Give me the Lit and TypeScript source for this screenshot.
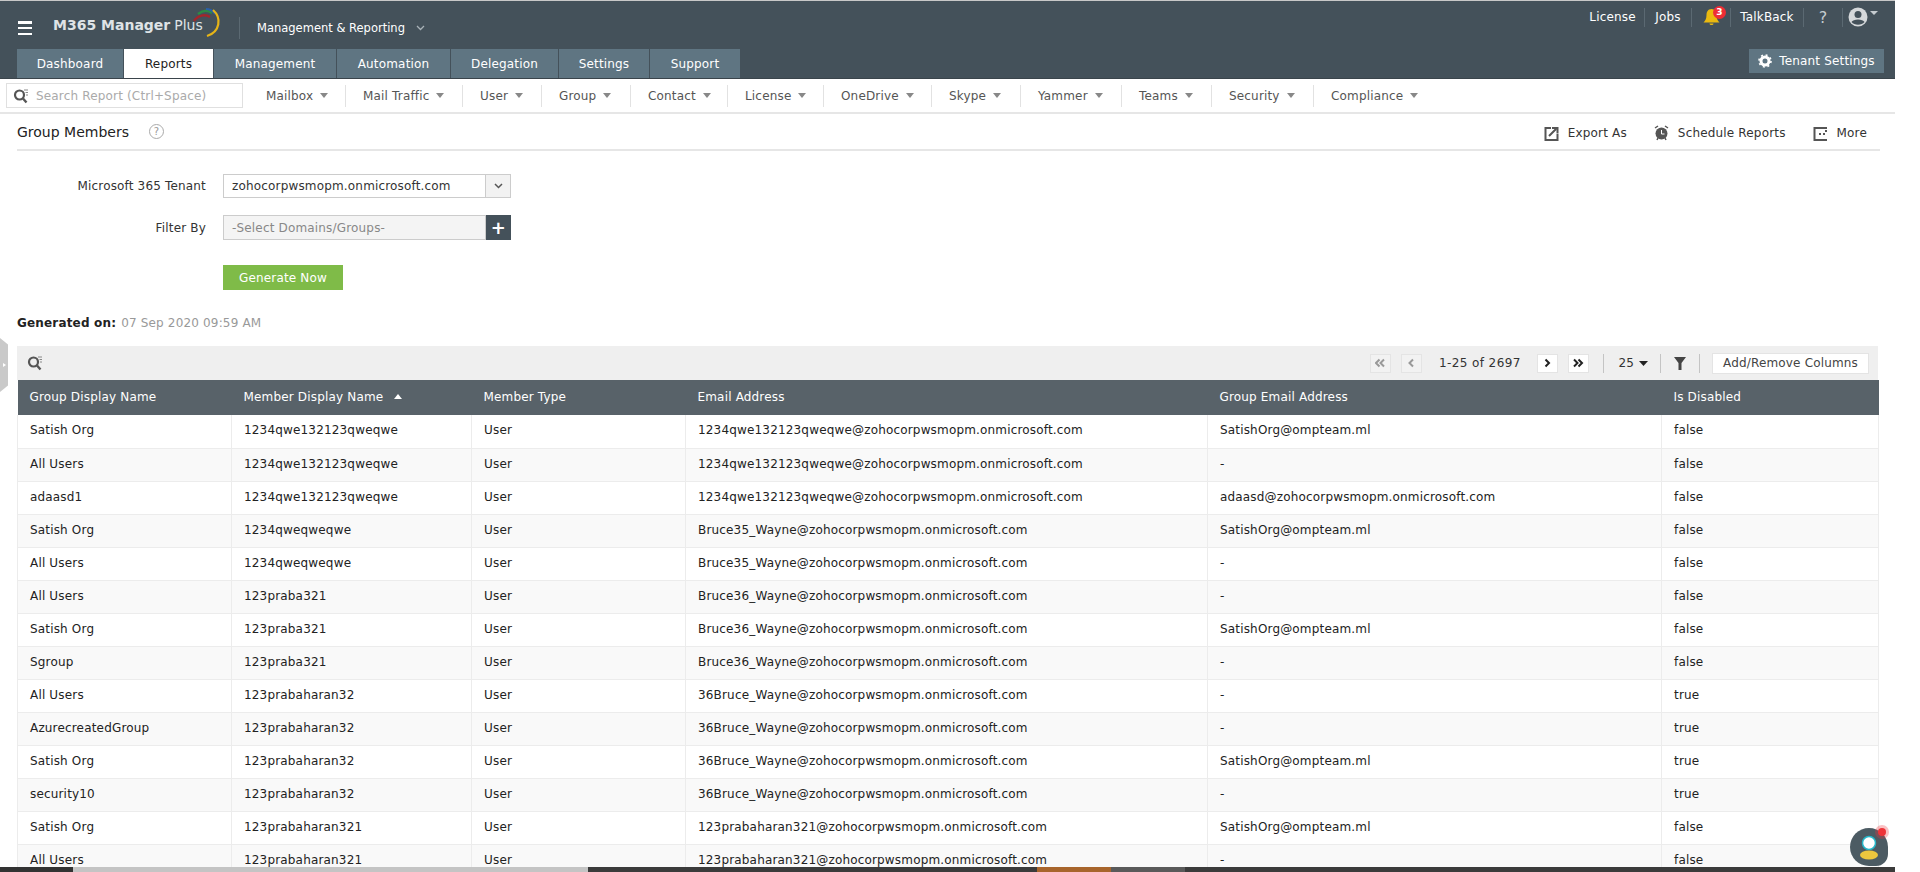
import { LitElement, html, css, svg } from "lit";
import { customElement } from "lit/decorators.js";

const D = "zohocorpwsmopm.onmicrosoft.com";
const rows: string[][] = [
  ["Satish Org", "1234qwe132123qweqwe", "1234qwe132123qweqwe@" + D, "SatishOrg@ompteam.ml", "false"],
  ["All Users", "1234qwe132123qweqwe", "1234qwe132123qweqwe@" + D, "-", "false"],
  ["adaasd1", "1234qwe132123qweqwe", "1234qwe132123qweqwe@" + D, "adaasd@" + D, "false"],
  ["Satish Org", "1234qweqweqwe", "Bruce35_Wayne@" + D, "SatishOrg@ompteam.ml", "false"],
  ["All Users", "1234qweqweqwe", "Bruce35_Wayne@" + D, "-", "false"],
  ["All Users", "123praba321", "Bruce36_Wayne@" + D, "-", "false"],
  ["Satish Org", "123praba321", "Bruce36_Wayne@" + D, "SatishOrg@ompteam.ml", "false"],
  ["Sgroup", "123praba321", "Bruce36_Wayne@" + D, "-", "false"],
  ["All Users", "123prabaharan32", "36Bruce_Wayne@" + D, "-", "true"],
  ["AzurecreatedGroup", "123prabaharan32", "36Bruce_Wayne@" + D, "-", "true"],
  ["Satish Org", "123prabaharan32", "36Bruce_Wayne@" + D, "SatishOrg@ompteam.ml", "true"],
  ["security10", "123prabaharan32", "36Bruce_Wayne@" + D, "-", "true"],
  ["Satish Org", "123prabaharan321", "123prabaharan321@" + D, "SatishOrg@ompteam.ml", "false"],
  ["All Users", "123prabaharan321", "123prabaharan321@" + D, "-", "false"],
];
const tabs = ["Dashboard", "Reports", "Management", "Automation", "Delegation", "Settings", "Support"];
const tabW = [107, 90, 123, 114, 108, 91, 91];
const menus = ["Mailbox", "Mail Traffic", "User", "Group", "Contact", "License", "OneDrive", "Skype", "Yammer", "Teams", "Security", "Compliance"];
const menuW = [79, 117, 79, 89, 97, 96, 108, 89, 101, 90, 102, 130];

const searchIcon = svg`<svg viewBox="0 0 16 16" width="16" height="16"><circle cx="6.500" cy="7" r="4.500" fill="none" stroke="#555" stroke-width="2.200"/><path d="M10 10.500l3.500 4" stroke="#555" stroke-width="2.400"/><path d="M11 2h4M12.500 4.500h2.500M13 7h2" stroke="#888" stroke-width="1"/></svg>`;
const chev = (dir: number, dbl: boolean, c: string) => {
  const p = (x: number) => dir > 0 ? `M${x} 1.500l3.500 3.500-3.500 3.500` : `M${x + 3.5} 1.500l-3.500 3.500 3.500 3.500`;
  return svg`<svg width="11" height="10" viewBox="0 0 11 10" fill="none"><path d="${dbl ? p(1) + p(5.5) : p(3.5)}" stroke="${c}" stroke-width="2"/></svg>`;
};

@customElement("app-root")
export class AppRoot extends LitElement {
  static styles = css`
    :host { display: block; width: 1920px; height: 872px; overflow: hidden; position: relative; background: #fff;
      font-family: "DejaVu Sans", Verdana, sans-serif; font-size: 12px; letter-spacing: .17px; color: #222; }
    .page { width: 1895px; }
    .top { height: 77px; background: #44515a; border-top: 1px solid #c8c8c8; display: flex; flex-direction: column; border-bottom: 1px solid #3a444b; }
    .brandrow { height: 48px; display: flex; align-items: flex-start; flex: none; }
    .burger { margin: 20px 0 0 18px; width: 14px; height: 14px; display: flex; flex-direction: column; justify-content: space-between; }
    .burger i { display: block; height: 2.500px; background: #fff; }
    .logo { margin: 14px 0 0 21px; position: relative; width: 186px; height: 20px; display: flex; align-items: center; color: #dfe3e6; font-size: 14px; font-weight: 700; letter-spacing: 0; white-space: nowrap; }
    .logo span { font-weight: 400; margin-left: 4px; }
    .logo svg { position: absolute; left: 140px; top: -7px; }
    .vsep { width: 1px; height: 22px; background: #5b6972; margin: 16px 0 0 0; }
    .mr { margin: 18px 0 0 17px; color: #fff; font-size: 11.500px; letter-spacing: 0; display: flex; align-items: center; gap: 11px; height: 18px; }
    .right { margin-left: auto; display: flex; align-items: center; height: 32px; color: #fff; padding-right: 10px; }
    .right > div { height: 19px; border-right: 1px solid #5b6972; box-sizing: border-box; display: flex; align-items: center; justify-content: center; }
    .right > div:last-child { border: 0; }
    .bell { position: relative; }
    .badge { position: absolute; left: 21px; top: -2px; width: 13px; height: 13px; border-radius: 50%; background: #ee2d35; color: #fff; font-size: 9px; font-weight: 700; display: flex; align-items: center; justify-content: center; }
    .tabrow { height: 29px; display: flex; padding-left: 17px; align-items: flex-end; flex: none; }
    .tab { height: 29px; background: #5f7582; color: #fff; display: flex; align-items: center; justify-content: center; border-right: 1px solid #44515a; box-sizing: border-box; }
    .tab.on { background: #fff; color: #222; }
    .tenant { margin-left: auto; margin-right: 11px; margin-bottom: 5px; width: 135px; height: 24px; background: #5f7582; color: #fff; display: flex; align-items: center; justify-content: center; gap: 7px; }
    .menubar { height: 35px; border-bottom: 2px solid #e6e6e6; box-sizing: border-box; display: flex; align-items: center; }
    .search { margin-left: 6px; width: 237px; height: 25px; border: 1px solid #e0e0e0; box-sizing: border-box; display: flex; align-items: center; color: #aaa; gap: 7px; padding-left: 6px; white-space: nowrap; }
    .menus { display: flex; margin-left: 23px; }
    .menu { display: flex; align-items: center; color: #555; height: 22px; white-space: nowrap; padding-left: 17px; border-left: 1px solid #e2e2e2; box-sizing: border-box; }
    .menu:first-child { padding-left: 0; border-left: 0; }
    .menu i { margin-left: 7px; border: 4px solid transparent; border-top: 5px solid #888; border-bottom: 0; }
    .titlebar { margin: 0 15px 0 17px; height: 37px; border-bottom: 2px solid #e6e6e6; box-sizing: border-box; display: flex; align-items: center; }
    .title { font-size: 14px; letter-spacing: 0; color: #222; }
    .help { margin-left: 20px; width: 13px; height: 13px; border-radius: 50%; border: 1.500px solid #aaa; color: #999; font-size: 10px; display: flex; align-items: center; justify-content: center; }
    .actions { margin-left: auto; display: flex; gap: 27px; padding: 3px 13px 0 0; color: #333; }
    .actions div { display: flex; align-items: center; gap: 9px; }
    .form { display: grid; grid-template-columns: 206px 288px; column-gap: 17px; margin-top: 23px; align-items: center; row-gap: 17px; }
    .lbl { text-align: right; color: #333; }
    .select { height: 24px; border: 1px solid #ccc; box-sizing: border-box; display: flex; align-items: center; padding-left: 8px; color: #333; position: relative; }
    .select .arr { position: absolute; right: 0; top: 0; bottom: 0; width: 24px; background: #f2f2f2; border-left: 1px solid #ccc; display: flex; align-items: center; justify-content: center; }
    .filter { height: 25px; display: flex; }
    .filter .inp { flex: 1; border: 1px solid #ccc; background: #f4f4f4; color: #888; display: flex; align-items: center; padding-left: 8px; }
    .plus { width: 25px; background: #44515a; color: #fff; display: flex; align-items: center; justify-content: center; font-size: 18px; font-weight: 700; }
    .gen { width: 120px; height: 25px; background: #7fbb48; color: #fff; display: flex; align-items: center; justify-content: center; }
    .gencell { grid-column: 2; margin-top: 8px; }
    .genon { margin: 23px 0 0 17px; height: 20px; display: flex; align-items: center; gap: 5px; color: #999; }
    .genon b { color: #222; }
    .wrap { margin: 13px 17px 0 17px; width: 1861px; }
    .tools { height: 34px; background: #efefef; display: flex; align-items: center; padding-left: 10px; }
    .pager { margin-left: auto; display: flex; align-items: center; color: #333; padding-right: 9px; }
    .pbtn { width: 21px; height: 19px; display: flex; align-items: center; justify-content: center; background: #fff; border: 1px solid #e4e4e4; box-sizing: border-box; }
    .pbtn.off { background: #f2f2f2; }
    .gap10 { margin-left: 10px; }
    .count { width: 115px; text-align: center; white-space: nowrap; letter-spacing: .4px; }
    .tsep { width: 1px; height: 19px; background: #c4c4c4; margin-left: 14px; }
    .size { margin: 0 12px 0 14px; display: flex; align-items: center; gap: 5px; }
    .size + .tsep { margin-left: 0; }
    .fil { margin: 0 13px; }
    .fil + .tsep { margin-left: 0; }
    .addrm { width: 157px; height: 21px; background: #fff; border: 1px solid #e4e4e4; box-sizing: border-box; display: flex; align-items: center; justify-content: center; color: #444; margin-left: 12px; white-space: nowrap; }
    table { width: 1861px; border-collapse: collapse; table-layout: fixed; }
    .c1, .c3 { width: 214px; } .c2 { width: 240px; } .c4 { width: 522px; } .c5 { width: 454px; } .c6 { width: 217px; }
    th { height: 35px; background: #586269; color: #fff; font-weight: 400; text-align: left; padding: 0 0 2px 12px; box-sizing: border-box; white-space: nowrap; }
    td { height: 33px; box-sizing: border-box; padding: 0 0 2px 12px; color: #222; white-space: nowrap; border: 1px solid #ececec; border-top: 0; }
    tr:nth-child(even) td { background: #f9f9f9; }
    .sort { display: inline-block; margin-left: 11px; border: 4px solid transparent; border-bottom: 5px solid #fff; border-top: 0; vertical-align: 2px; }
    .q { font-size: 16px; color: #c5cbcf; }
    .handle { position: absolute; left: 0; top: 338px; width: 8px; height: 54px; background: #c9c9c9; clip-path: polygon(0 0, 100% 12%, 100% 88%, 0 100%); display: flex; align-items: center; }
    .handle i { margin-left: 3px; border: 2px solid transparent; border-left: 3px solid #fff; border-right: 0; }
    .taskbar { position: absolute; left: 0; right: 25px; bottom: 0; height: 5px; background: #3b3b3b; display: flex; }
    .t1, .t2, .t3, .t4, .t5 { display: block; height: 5px; }
    .t1 { width: 73px; background: #333; } .t2 { width: 515px; background: #c4c4c4; } .t3 { width: 449px; background: #3b3b3b; } .t4 { width: 74px; background: #a8652c; } .t5 { width: 74px; background: #5a5a5a; }
    .chat { position: absolute; left: 1850px; top: 828px; width: 38px; height: 38px; background: #4c5b63; border-radius: 50% 50% 12px 50%; }
    .chat .dot { position: absolute; left: 28px; top: 0; width: 8px; height: 8px; border-radius: 50%; background: #ee3338; box-shadow: 0 0 0 3px rgba(238,51,56,.3); }
  `;

  render() {
    return html`
      <div class="page">
        <div class="top">
          <div class="brandrow">
            <div class="burger"><i></i><i></i><i></i></div>
            <div class="logo">M365 Manager<span>Plus</span>
              <svg width="30" height="36" viewBox="0 0 30 36" fill="none">
                <path d="M1 13C5 7 12 6 17 9" stroke="#a3262b" stroke-width="2.500"/>
                <path d="M5 6C10 2 15 2 19 5" stroke="#2d8a46" stroke-width="2.500"/>
                <path d="M13 1C17 1 20 3 22 6" stroke="#2a5fa8" stroke-width="2"/>
                <path d="M20 2C29 10 27 24 14 28" stroke="#e6b417" stroke-width="2.200"/>
              </svg>
            </div>
            <div class="vsep"></div>
            <div class="mr">Management &amp; Reporting
              <svg width="9" height="6" viewBox="0 0 9 6"><path d="M1 1l3.500 3.500L8 1" fill="none" stroke="#a9b2b8" stroke-width="1.300"/></svg>
            </div>
            <div class="right">
              <div style="width:64px">License</div>
              <div style="width:47px">Jobs</div>
              <div class="bell" style="width:39px">
                <svg width="17" height="19" viewBox="0 0 17 19"><path d="M8.500 1C5 1 3.500 4 3.500 7c0 4-1.500 6-3 7.500h16c-1.500-1.500-3-3.500-3-7.500 0-3-1.500-6-5-6z M6.500 15.500h4c0 2-4 2-4 0z" fill="#eab90f"/></svg>
                <span class="badge">3</span>
              </div>
              <div style="width:73px">TalkBack</div>
              <div class="q" style="width:39px">?</div>
              <div style="width:42px">
                <svg width="32" height="20" viewBox="0 0 32 20"><circle cx="10" cy="10" r="9.500" fill="#d5d8da"/><circle cx="10" cy="7.500" r="3.500" fill="#44515a"/><path d="M3.500 15c1.500-3.500 11.500-3.500 13 0-3 3.500-10 3.500-13 0z" fill="#44515a"/><path d="M22 4h8l-4 4z" fill="#c5cbcf"/></svg>
              </div>
            </div>
          </div>
          <div class="tabrow">
            ${tabs.map((t, i) => html`<div class="tab ${i === 1 ? "on" : ""}" style="width:${tabW[i]}px">${t}</div>`)}
            <div class="tenant">
              <svg width="14" height="14" viewBox="0 0 14 14"><circle cx="7" cy="7" r="4" fill="none" stroke="#fff" stroke-width="3"/><circle cx="7" cy="7" r="6" fill="none" stroke="#fff" stroke-width="1.600" stroke-dasharray="2 2.700"/></svg>
              Tenant Settings
            </div>
          </div>
        </div>
        <div class="menubar">
          <div class="search">${searchIcon}Search Report (Ctrl+Space)</div>
          <div class="menus">${menus.map((m, i) => html`<div class="menu" style="width:${menuW[i]}px">${m}<i></i></div>`)}</div>
        </div>
        <div class="titlebar">
          <div class="title">Group Members</div><div class="help">?</div>
          <div class="actions">
            <div><svg width="15" height="15" viewBox="0 0 15 15" fill="none"><path d="M7 2H1.500v12h12V8" stroke="#555" stroke-width="2"/><path d="M5 10l7-7M8 2h5.500v5.500" stroke="#555" stroke-width="2"/></svg>Export As</div>
            <div><svg width="15" height="16" viewBox="0 0 15 16"><circle cx="7.500" cy="8.500" r="6" fill="#555"/><path d="M7.500 5v4h3" stroke="#fff" fill="none"/><path d="M1 3l3-2M14 3l-3-2M3 15l1-2M12 15l-1-2" stroke="#555" stroke-width="1.500"/></svg>Schedule Reports</div>
            <div><svg width="15" height="15" viewBox="0 0 15 15" fill="none"><path d="M14 2H1.500v12H14" stroke="#555" stroke-width="2"/><path d="M6 8h2M10 8h2M12 5h2" stroke="#555" stroke-width="2"/></svg>More</div>
          </div>
        </div>
        <div class="form">
          <div class="lbl">Microsoft 365 Tenant</div>
          <div class="select">zohocorpwsmopm.onmicrosoft.com<span class="arr"><svg width="9" height="6" viewBox="0 0 9 6"><path d="M1 1l3.500 3.500L8 1" fill="none" stroke="#555" stroke-width="1.500"/></svg></span></div>
          <div class="lbl">Filter By</div>
          <div class="filter"><div class="inp">-Select Domains/Groups-</div><div class="plus">+</div></div>
          <div class="gencell"><div class="gen">Generate Now</div></div>
        </div>
        <div class="genon"><b>Generated on:</b> 07 Sep 2020 09:59 AM</div>
        <div class="wrap">
          <div class="tools">
            ${searchIcon}
            <div class="pager">
              <span class="pbtn off">${chev(-1, true, "#999")}</span>
              <span class="pbtn off gap10">${chev(-1, false, "#999")}</span>
              <span class="count">1-25 of 2697</span>
              <span class="pbtn">${chev(1, false, "#222")}</span>
              <span class="pbtn gap10">${chev(1, true, "#222")}</span>
              <span class="tsep"></span>
              <span class="size">25 <svg width="9" height="5" viewBox="0 0 9 5"><path d="M0 0h9L4.500 5z" fill="#222"/></svg></span>
              <span class="tsep"></span>
              <svg class="fil" width="12" height="13" viewBox="0 0 12 13"><path d="M0 0h12L7.500 6v7h-3V6z" fill="#444"/></svg>
              <span class="tsep"></span>
              <span class="addrm">Add/Remove Columns</span>
            </div>
          </div>
          <table>
            <colgroup><col class="c1"><col class="c2"><col class="c3"><col class="c4"><col class="c5"><col class="c6"></colgroup>
            <thead><tr><th>Group Display Name</th><th>Member Display Name<span class="sort"></span></th><th>Member Type</th><th>Email Address</th><th>Group Email Address</th><th>Is Disabled</th></tr></thead>
            <tbody>${rows.map((r) => html`<tr><td>${r[0]}</td><td>${r[1]}</td><td>User</td><td>${r[2]}</td><td>${r[3]}</td><td>${r[4]}</td></tr>`)}</tbody>
          </table>
        </div>
      </div>
      <div class="handle"><i></i></div>
      <div class="chat">
        <svg width="38" height="38" viewBox="0 0 38 38"><circle cx="19" cy="15" r="6.500" fill="#fff" stroke="#25b7c9" stroke-width="1.500"/><ellipse cx="19" cy="27" rx="9" ry="4.500" fill="#ecc63e"/></svg>
        <span class="dot"></span>
      </div>
      <div class="taskbar"><i class="t1"></i><i class="t2"></i><i class="t3"></i><i class="t4"></i><i class="t5"></i></div>
    `;
  }
}
